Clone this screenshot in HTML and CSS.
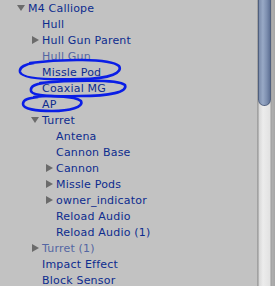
FILE: index.html
```html
<!DOCTYPE html>
<html lang="en">
<head>
  <meta charset="UTF-8" />
  <title>Hierarchy</title>
  <link rel="stylesheet" href="styles.css">
</head>
<body>
  <div class="panel">
    <ul class="tree">
      <li class="row d0"><span class="arrow open"></span>M4 Calliope</li>
      <li class="row d1"><span class="arrow"></span>Hull</li>
      <li class="row d1"><span class="arrow closed"></span>Hull Gun Parent</li>
      <li class="row d1 faded"><span class="arrow"></span>Hull Gun</li>
      <li class="row d1"><span class="arrow"></span>Missle Pod</li>
      <li class="row d1"><span class="arrow"></span>Coaxial MG</li>
      <li class="row d1"><span class="arrow"></span>AP</li>
      <li class="row d1"><span class="arrow open"></span>Turret</li>
      <li class="row d2"><span class="arrow"></span>Antena</li>
      <li class="row d2"><span class="arrow"></span>Cannon Base</li>
      <li class="row d2"><span class="arrow closed"></span>Cannon</li>
      <li class="row d2"><span class="arrow closed"></span>Missle Pods</li>
      <li class="row d2"><span class="arrow closed"></span>owner_indicator</li>
      <li class="row d2"><span class="arrow"></span>Reload Audio</li>
      <li class="row d2"><span class="arrow"></span>Reload Audio (1)</li>
      <li class="row d1 faded"><span class="arrow closed"></span>Turret (1)</li>
      <li class="row d1"><span class="arrow"></span>Impact Effect</li>
      <li class="row d1"><span class="arrow"></span>Block Sensor</li>
    </ul>

    <!-- hand drawn marks over the tree -->
    <svg class="marks" width="140" height="120" viewBox="0 0 140 120">
      <path d="M30 63 C60 59, 110 58, 119 66 C123 72, 112 79, 80 79 C50 80, 22 79, 20 72 C19 67, 26 64, 34 63" />
      <path d="M40 83 C70 80, 118 79, 125 85 C128 92, 110 96, 80 96 C55 97, 32 96, 31 91 C30 86, 36 84, 44 83" />
      <path d="M34 97 C50 95, 75 96, 81 101 C84 107, 70 111, 52 111 C36 111, 23 109, 23 104 C23 99, 30 98, 38 97" />
    </svg>
  </div>

  <div class="scrollbar">
    <div class="thumb"></div>
  </div>
</body>
</html>
```

FILE: styles.css
```css
* {
  box-sizing: border-box;
}

html, body {
  margin: 0;
  height: 100%;
}

body {
  display: flex;
  background: #c2c2c2;
  font-family: "DejaVu Sans", Verdana, sans-serif;
  font-size: 11px;
  letter-spacing: 0.2px;
  overflow: hidden;
}

.panel {
  position: relative;
  flex: 1;
}

.tree {
  list-style: none;
  margin: 0;
  padding: 0;
}

.row {
  display: flex;
  align-items: center;
  height: 16px;
  color: #0d2c8e;
  white-space: nowrap;
}

.row.faded {
  color: #5366a3;
}

.d0 { padding-left: 17px; }
.d1 { padding-left: 31px; }
.d2 { padding-left: 45px; }

.arrow {
  width: 11px;
  height: 16px;
  flex: none;
  position: relative;
}

.arrow.open::before,
.arrow.closed::before {
  content: "";
  position: absolute;
  width: 0;
  height: 0;
}

.arrow.open::before {
  left: 0;
  top: 5px;
  border-left: 4px solid transparent;
  border-right: 4px solid transparent;
  border-top: 6px solid #6b6b6b;
}

.arrow.closed::before {
  left: 1px;
  top: 4px;
  border-top: 4px solid transparent;
  border-bottom: 4px solid transparent;
  border-left: 7px solid #6b6b6b;
}

.marks {
  position: absolute;
  left: 0;
  top: 0;
  fill: none;
  stroke: #0a1ee6;
  stroke-width: 2.6;
  stroke-linecap: round;
}

.scrollbar {
  width: 18px;
  flex: none;
  background: linear-gradient(to right, #b4b4b4 0, #8f8f8f 1px, #d8d8d8 2px, #ececec 6px, #e2e2e2 13px, #9a9a9a 14px, #b0b0b0 15px, #a6a6a6 18px);
}

.thumb {
  margin-left: 1px;
  width: 13px;
  height: 106px;
  border: 1px solid #4f5f7e;
  border-top: none;
  border-radius: 0 0 7px 7px;
  background: linear-gradient(to right, #7b8cab, #98a9c6 35%, #7d8fb0 70%, #5f7195);
}
```
